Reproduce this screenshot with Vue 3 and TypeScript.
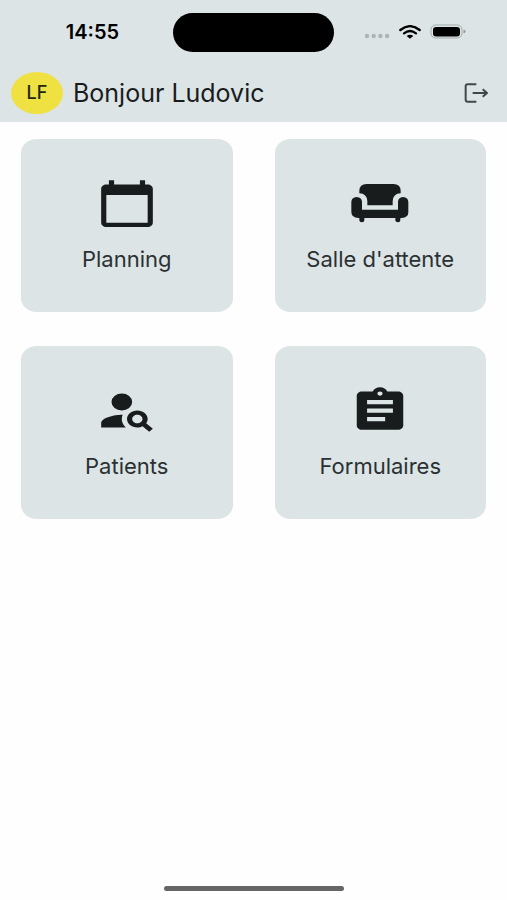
<script setup lang="ts">
interface Tile {
  label: string
  viewBox: string
  path: string
}

const user = { name: 'Ludovic', initials: 'LF' }

const tiles: Tile[] = [
  {
    label: 'Planning',
    viewBox: '0 0 24 24',
    path: 'M20 3h-1V1h-2v2H7V1H5v2H4c-1.1 0-2 .9-2 2v16c0 1.1.9 2 2 2h16c1.1 0 2-.9 2-2V5c0-1.1-.9-2-2-2zm0 18H4V8h16v13z',
  },
  {
    label: "Salle d'attente",
    viewBox: '0 0 186 153',
    path: 'M53 18H133Q155 19 155 38V46Q132 47 131 70V82H55V70Q54 47 31 46V38Q31 19 53 18ZM23 57Q39 58 39 72V95H147V72Q147 58 162 57Q178 58 178 72V103Q178 119 158 120H154V127Q154 133 147 133Q139 133 139 127V120H46V127Q46 133 39 133Q31 133 31 127V120H28Q8 119 7 103V72Q7 58 23 57Z',
  },
  {
    label: 'Patients',
    viewBox: '0 0 24 24',
    path: 'M10 4a4 4 0 1 0 0 8 4 4 0 0 0 0-8zM10.35 14.01C7.62 13.91 2 15.27 2 18v2h9.54c-2.47-2.76-1.23-5.89-1.19-5.99zM19.43 18.02c.36-.59.57-1.28.57-2.02 0-2.21-1.79-4-4-4s-4 1.79-4 4 1.79 4 4 4c.74 0 1.43-.22 2.02-.57L20.59 22 22 20.59l-2.57-2.57zM16 18c-1.1 0-2-.9-2-2s.9-2 2-2 2 .9 2 2-.9 2-2 2z',
  },
  {
    label: 'Formulaires',
    viewBox: '0 0 24 24',
    path: 'M19 3h-4.18C14.4 1.84 13.3 1 12 1c-1.3 0-2.4.84-2.82 2H5c-1.1 0-2 .9-2 2v14c0 1.1.9 2 2 2h14c1.1 0 2-.9 2-2V5c0-1.1-.9-2-2-2zm-7 0c.55 0 1 .45 1 1s-.45 1-1 1-1-.45-1-1 .45-1 1-1zm2 14H7v-2h7v2zm3-4H7v-2h10v2zm0-4H7V7h10v2z',
  },
]
</script>

<template>
  <div class="screen">
    <header class="header">
      <div class="status">
        <time class="clock">14:55</time>
        <div class="island"></div>
        <div class="indicators">
          <svg class="signal" viewBox="0 0 26 6" aria-hidden="true">
            <circle cx="3" cy="3" r="2.2" />
            <circle cx="9.7" cy="3" r="2.2" />
            <circle cx="16.4" cy="3" r="2.2" />
            <circle cx="23.1" cy="3" r="2.2" />
          </svg>
          <svg class="wifi" viewBox="0 0 66 42" aria-hidden="true">
            <path d="M4 15Q33-8 62 15M15 25Q33 11 51 25" />
            <path class="wifi-dot" d="M23 33Q33 26 43 33L33 41Z" />
          </svg>
          <svg class="battery" viewBox="0 0 36 16" aria-hidden="true">
            <rect class="battery-shell" x="1" y="1" width="31" height="13" rx="4.5" />
            <rect x="3" y="3" width="27" height="9.5" rx="3" />
            <path class="battery-tip" d="M33.5 5.5Q35.5 6 35.5 7.5T33.5 9.5Z" />
          </svg>
        </div>
      </div>
      <div class="greeting">
        <span class="avatar">{{ user.initials }}</span>
        <h1 class="title">Bonjour {{ user.name }}</h1>
        <button class="logout" type="button" aria-label="Se déconnecter">
          <svg viewBox="0 0 72 60" aria-hidden="true">
            <path d="M37 4H11Q5 4 5 10V50Q5 56 11 56H37M26 30H68" />
            <path d="M56 19L69 30L56 41" />
          </svg>
        </button>
      </div>
    </header>

    <main class="tiles">
      <button v-for="tile in tiles" :key="tile.label" class="tile" type="button">
        <svg class="tile-icon" :viewBox="tile.viewBox" preserveAspectRatio="none" aria-hidden="true">
          <path :d="tile.path" />
        </svg>
        <span class="tile-label">{{ tile.label }}</span>
      </button>
    </main>

    <footer class="home">
      <div class="home-bar"></div>
    </footer>
  </div>
</template>

<style>
body {
  margin: 0;
  background: #fefefe;
}
</style>

<style scoped>
.screen {
  display: flex;
  flex-direction: column;
  min-height: 100vh;
  font-family: Inter, 'Liberation Sans', sans-serif;
  color: #191c1d;
}

.header {
  background: #dce4e5;
}

.status {
  display: grid;
  grid-template-columns: 1fr 161px 1fr;
  align-items: center;
  height: 64px;
}

.clock {
  padding-left: 12px;
  text-align: center;
  font-size: 20px;
  line-height: 24px;
  font-weight: 600;
  color: #000;
}

.island {
  height: 39px;
  border-radius: 20px;
  background: #000;
}

.indicators {
  display: flex;
  align-items: center;
  justify-content: center;
  gap: 9px;
  padding-right: 12px;
}

.signal {
  width: 26px;
  height: 6px;
  margin-top: 8px;
  fill: #aeb5b6;
}

.wifi {
  width: 22px;
  height: 14px;
  fill: none;
  stroke: #000;
  stroke-width: 7;
  stroke-linecap: round;
}

.wifi-dot {
  fill: #000;
  stroke: none;
}

.battery {
  width: 36px;
  height: 16px;
}

.battery-shell {
  fill: none;
  stroke: #a2a9a9;
}

.battery-tip {
  fill: #8f9696;
}

.greeting {
  display: flex;
  align-items: center;
  gap: 10px;
  height: 58px;
  padding: 0 16px 0 11px;
}

.avatar {
  display: flex;
  align-items: center;
  justify-content: center;
  width: 52px;
  height: 42px;
  border-radius: 50%;
  background: #f0e143;
  font-size: 18px;
  line-height: 24px;
  font-weight: 500;
  color: #20250b;
}

.title {
  flex: 1;
  margin: 0;
  font-size: 25px;
  line-height: 32px;
  font-weight: 400;
}

.logout {
  display: flex;
  padding: 0 3px;
  border: 0;
  background: none;
}

.logout svg {
  width: 24px;
  height: 20px;
  fill: none;
  stroke: #3f484a;
  stroke-width: 6;
  stroke-linejoin: round;
}

.tiles {
  display: grid;
  grid-template-columns: 1fr 1fr;
  gap: 34px 42px;
  padding: 17px 21px;
}

.tile {
  display: flex;
  flex-direction: column;
  align-items: center;
  gap: 16px;
  padding: 39px 8px 39px;
  border: 0;
  border-radius: 16px / 14px;
  background: #dce4e5;
  font-family: inherit;
  color: inherit;
}

.tile-icon {
  width: 62px;
  height: 51px;
  fill: #191c1d;
}

.tile-label {
  font-size: 22px;
  line-height: 28px;
  color: #2b3133;
}

.home {
  display: flex;
  justify-content: center;
  margin-top: auto;
  padding-bottom: 9px;
}

.home-bar {
  width: 180px;
  height: 5px;
  border-radius: 3px;
  background: #666;
}
</style>
